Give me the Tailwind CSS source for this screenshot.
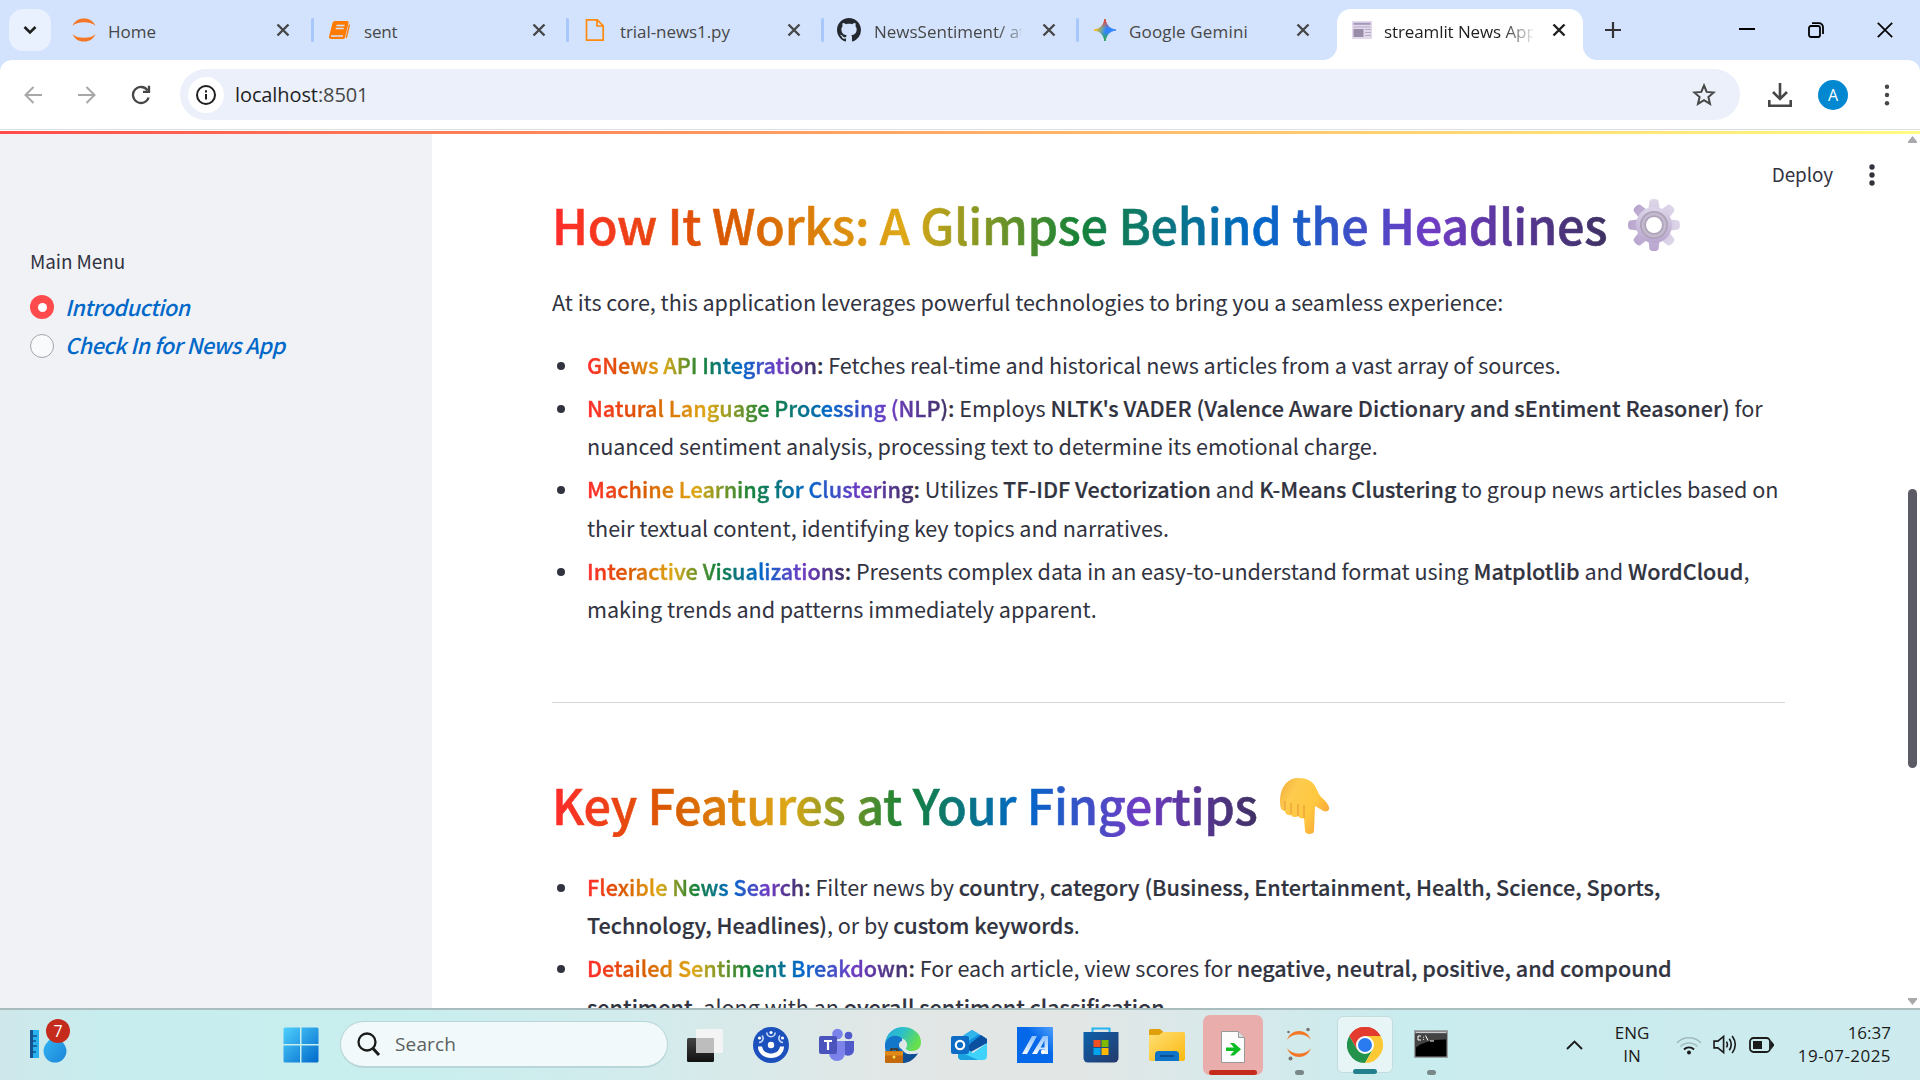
<!DOCTYPE html>
<html lang="en">
<head>
<meta charset="utf-8">
<title>streamlit News App</title>
<script src="https://cdn.jsdelivr.net/npm/@tailwindcss/browser@4"></script>
</head>
<body class="w-[1920px] h-[1080px] overflow-hidden flex flex-col bg-white font-['Open_Sans','Noto_Sans',sans-serif]">

<!-- Tab strip -->
<header class="h-[60px] shrink-0 bg-[#d3e3fd] flex text-[17px] text-[#474747] relative">
  <div class="ml-[9px] mt-[9px] w-[42px] h-[42px] rounded-[14px] bg-[#e9f0fe] grid place-items-center mr-[9px]">
    <svg width="14" height="10" viewBox="0 0 14 10" fill="none" stroke="#1f1f1f" stroke-width="2.6"><path d="M1.5 2l5.5 5.5L12.500 2"/></svg>
  </div>
  <div class="w-[255px] flex items-center pl-3">
    <svg width="24" height="24" viewBox="0 0 24 24" fill="#f37726"><path d="M.5 8C2.500 3 6.500.5 12 .5S21.500 3 23.500 8C21 5.300 17 4.200 12 4.200S3 5.300.5 8zM.5 16C3 18.700 7 19.800 12 19.800s9-1.100 11.500-3.800c-2 5-6 7.500-11.500 7.500S2.500 21 .5 16z"/></svg>
    <span class="ml-3 w-[148px] pt-[3px] whitespace-nowrap">Home</span>
    <svg class="ml-[20px]" width="14" height="14" viewBox="0 0 14 14" stroke="#474747" stroke-width="2.400"><path d="M1.500 1.500l11 11M12.500 1.500l-11 11"/></svg>
    <i class="ml-auto mr-[1px] w-[3px] h-6 rounded bg-[#a8c7fa]"></i>
  </div>
  <div class="w-[255px] flex items-center pl-3">
    <svg width="24" height="24" viewBox="0 0 24 24"><path d="M7.500 3H20a1.500 1.500 0 0 1 1.500 2L18 19.500a2 2 0 0 1-2 1.500H4a2 2 0 0 1-2-2.500L5.500 5a2.500 2.500 0 0 1 2-2z" fill="#ff7b00"/><path d="M9.500 7.500h8M8.700 10.500h8M4 18h12" stroke="#d3e3fd" stroke-width="1.300"/><path d="M22.500 6.500L19.300 20" stroke="#ff7b00" stroke-width="1.300"/></svg>
    <span class="ml-[13px] w-[147px] pt-[3px] whitespace-nowrap tracking-[-0.2px]">sent</span>
    <svg class="ml-[21px]" width="14" height="14" viewBox="0 0 14 14" stroke="#474747" stroke-width="2.400"><path d="M1.500 1.500l11 11M12.500 1.500l-11 11"/></svg>
    <i class="ml-auto mr-[1px] w-[3px] h-6 rounded bg-[#a8c7fa]"></i>
  </div>
  <div class="w-[255px] flex items-center pl-3">
    <svg width="24" height="24" viewBox="0 0 24 24" fill="none" stroke="#ff8a0f" stroke-width="1.700"><path d="M4.500 1.800h10.700l6 6v14.400H4.500zM15 2v6h6"/></svg>
    <span class="ml-[14px] w-[146px] pt-[3px] whitespace-nowrap tracking-[-0.07px]">trial-news1.py</span>
    <svg class="ml-[21px]" width="14" height="14" viewBox="0 0 14 14" stroke="#474747" stroke-width="2.400"><path d="M1.500 1.500l11 11M12.500 1.500l-11 11"/></svg>
    <i class="ml-auto mr-[1px] w-[3px] h-6 rounded bg-[#a8c7fa]"></i>
  </div>
  <div class="w-[255px] flex items-center pl-3">
    <svg width="24" height="24" viewBox="0 0 16 16" fill="#24292f"><path d="M8 0C3.580 0 0 3.580 0 8c0 3.540 2.290 6.530 5.470 7.590.4.070.55-.17.55-.38 0-.19-.01-.82-.01-1.490-2.010.37-2.530-.49-2.690-.94-.09-.23-.48-.94-.82-1.130-.28-.15-.68-.52-.01-.53.63-.01 1.080.58 1.230.82.72 1.210 1.870.87 2.330.66.07-.52.28-.87.51-1.070-1.780-.2-3.640-.89-3.640-3.950 0-.87.31-1.590.82-2.150-.08-.2-.36-1.020.08-2.120 0 0 .67-.21 2.200.82.64-.18 1.320-.27 2-.27s1.360.09 2 .27c1.530-1.040 2.200-.82 2.200-.82.44 1.100.16 1.920.08 2.120.51.56.82 1.270.82 2.150 0 3.070-1.870 3.750-3.650 3.950.29.25.54.73.54 1.480 0 1.070-.01 1.930-.01 2.200 0 .21.15.46.55.38A8.010 8.010 0 0 0 16 8c0-4.420-3.580-8-8-8z"/></svg>
    <span class="ml-[13px] w-[147px] pt-[3px] whitespace-nowrap [mask-image:linear-gradient(to_right,#000_122px,transparent_160px)]">NewsSentiment/ at</span>
    <svg class="ml-[21px]" width="14" height="14" viewBox="0 0 14 14" stroke="#474747" stroke-width="2.400"><path d="M1.500 1.500l11 11M12.500 1.500l-11 11"/></svg>
    <i class="ml-auto mr-[1px] w-[3px] h-6 rounded bg-[#a8c7fa]"></i>
  </div>
  <div class="w-[257px] flex items-center pl-[13px]">
    <svg width="24" height="24" viewBox="0 0 24 24"><defs><linearGradient id="ga" x1="0" x2="1" y1=".3" y2=".6"><stop offset=".1" stop-color="#fbbc04"/><stop offset=".42" stop-color="#5fa0b8"/><stop offset=".55" stop-color="#3186ff"/></linearGradient><linearGradient id="gb" x1="0" x2="0" y1="0" y2="1"><stop offset=".05" stop-color="#ea4335"/><stop offset=".42" stop-color="#ea4335" stop-opacity="0"/><stop offset=".6" stop-color="#34a853" stop-opacity="0"/><stop offset=".9" stop-color="#34a853"/></linearGradient></defs><path d="M12 1c1 6 4.500 10 11 11-6.500 1-10 5-11 11C11 17 7.500 13 1 12 7.500 11 11 7 12 1z" fill="url(#ga)" stroke="url(#ga)"/><path d="M12 1c1 6 4.500 10 11 11-6.500 1-10 5-11 11C11 17 7.500 13 1 12 7.500 11 11 7 12 1z" fill="url(#gb)" stroke="url(#gb)"/></svg>
    <span class="ml-[12px] w-[148px] pt-[3px] whitespace-nowrap tracking-[0.15px]">Google Gemini</span>
    <svg class="ml-[19px]" width="14" height="14" viewBox="0 0 14 14" stroke="#474747" stroke-width="2.400"><path d="M1.500 1.500l11 11M12.500 1.500l-11 11"/></svg>
  </div>
  <div class="relative w-[246px] mt-[9px] h-[51px] pb-[9px] rounded-t-[14px] bg-white flex items-center pl-[14px] text-[#1f1f1f]">
    <svg class="absolute -left-[14px] bottom-0" width="14" height="14"><path d="M14 0v14H0A14 14 0 0 0 14 0z" fill="#fff"/></svg>
    <svg class="absolute -right-[14px] bottom-0" width="14" height="14"><path d="M0 0v14h14A14 14 0 0 1 0 0z" fill="#fff"/></svg>
    <svg width="22" height="20" viewBox="0 0 22 20"><path d="M1 1h20v18H1z" fill="#e2d9ec"/><path d="M2.500 3.800h17" stroke="#a497b8" stroke-width="2"/><rect x="2.500" y="9" width="10" height="8" fill="#998ca8"/><path d="M14 9.500h6M14 12.500h6M14 15.500h6M2.500 7h17" stroke="#b5a9c4" stroke-width="1"/></svg>
    <span class="ml-[11px] w-[149px] pt-[4px] whitespace-nowrap tracking-[-0.1px] [mask-image:linear-gradient(to_right,#000_118px,transparent_152px)]">streamlit News App</span>
    <svg class="ml-[19px]" width="14" height="14" viewBox="0 0 14 14" stroke="#1f1f1f" stroke-width="2.400"><path d="M1.500 1.500l11 11M12.500 1.500l-11 11"/></svg>
  </div>
  <svg class="ml-[22px] mt-[22px]" width="16" height="16" stroke="#333" stroke-width="2.200"><path d="M8 0v16M0 8h16"/></svg>
  <svg class="ml-[118px] mt-[21px]" width="16" height="16" stroke="#000" stroke-width="2"><path d="M0 8h16"/></svg>
  <svg class="ml-[53px] mt-[22px]" width="16" height="16" fill="none" stroke="#000" stroke-width="1.800"><rect x="1" y="4" width="11" height="11" rx="2"/><path d="M4 1.200h7a4 4 0 0 1 4 4V12"/></svg>
  <svg class="ml-[53px] mt-[22px]" width="16" height="16" stroke="#000" stroke-width="1.700"><path d="M.8.8l14.400 14.400M15.200.8L.8 15.200"/></svg>
</header>

<!-- Address bar -->
<div class="h-[71px] shrink-0 bg-[#d3e3fd]">
 <div class="h-[71px] bg-white rounded-t-[12px]">
 <div class="h-[70px] flex items-center border-b border-[#dcdfe1]">
  <svg class="ml-6" width="18" height="18" fill="none" stroke="#a8a8a8" stroke-width="2"><path d="M18 9H1.500M9.500 1L1.500 9l8 8"/></svg>
  <svg class="ml-9" width="18" height="18" fill="none" stroke="#a8a8a8" stroke-width="2"><path d="M0 9h16.500M8.500 1l8 8-8 8"/></svg>
  <svg class="ml-[35px]" width="20" height="20" viewBox="0 0 20 20" fill="none" stroke="#474747" stroke-width="2.300"><path d="M17.600 12.500A8 8 0 1 1 16.500 5.300M18 .8V6.800H12"/></svg>
  <div class="ml-[29px] w-[1560px] h-[51px] rounded-full bg-[#ebf0fa] flex items-center pl-2">
    <div class="size-[36px] rounded-full bg-white grid place-items-center"><svg width="20" height="20" fill="none" stroke="#1f1f1f" stroke-width="2"><circle cx="10" cy="10" r="9"/><path d="M10 9v5.500M10 5.300v2.200"/></svg></div>
    <span class="ml-[11px] text-[20px] text-[#1f1f1f] whitespace-nowrap tracking-[-0.1px]">localhost<span class="text-[#474747]">:8501</span></span>
    <svg class="ml-auto mr-[24px]" width="24" height="24" viewBox="0 0 24 24" fill="none" stroke="#474747" stroke-width="2"><path d="M12 2.500l2.700 6.400 6.900.6-5.200 4.500 1.600 6.800-6-3.600-6 3.600 1.600-6.800-5.200-4.500 6.900-.6z"/></svg>
  </div>
  <svg class="ml-[28px]" width="24" height="24" fill="none" stroke="#474747" stroke-width="2.600"><path d="M12 0v15M5 9l7 7 7-7M1.300 17v5.700h21.400V17"/></svg>
  <div class="ml-[26px] size-[30px] rounded-full bg-[#0288d1] text-white text-[16px] grid place-items-center">A</div>
  <svg class="ml-[35px]" width="8" height="22" fill="#474747"><circle cx="4" cy="2.800" r="2.200"/><circle cx="4" cy="11" r="2.200"/><circle cx="4" cy="19.200" r="2.200"/></svg>
 </div>
 </div>
</div>

<div class="h-[3px] shrink-0 bg-linear-to-r from-[#ff4b4b] to-[#fffd80]"></div>

<!-- App -->
<div class="relative h-[874px] shrink-0 overflow-hidden flex font-['Noto_Sans_CJK_SC','Source_Sans_3',sans-serif] text-[#31333f]">
  <aside class="w-[432px] shrink-0 bg-[#f0f2f6] pl-[30px] pt-[110px]">
    <div class="text-[18.900px] leading-[34px] tracking-[-0.07px]">Main Menu</div>
    <div class="mt-[10px] flex flex-col text-[21.600px] leading-[38px] text-[#0068c9] italic font-medium tracking-[-0.45px]">
      <div class="h-[38px] flex items-center"><i class="size-6 rounded-full bg-[#ff4b4b] grid place-items-center"><i class="size-[9px] rounded-full bg-white"></i></i><span class="ml-[11px]">Introduction</span></div>
      <div class="h-[38px] flex items-center"><i class="mt-px size-6 rounded-full bg-[#f9fafc] border-[1.500px] border-[#a3a4ac]"></i><span class="ml-[11px]">Check In for News App</span></div>
    </div>
  </aside>
  <main class="w-[1470px] pl-[120px] pt-[58px] text-[21.600px] leading-[38.400px] whitespace-nowrap tracking-[-0.04px]">
    <h2 class="flex items-center text-[48.600px] leading-[65px] font-medium tracking-[-0.3px]"><span class="bg-clip-text text-transparent [-webkit-text-stroke:0.6px_transparent] bg-[linear-gradient(to_right,#ff2b2b,#d95a00,#dea816,#158237,#0068c9,#6f3cc4,#3f3163)]">How It Works: A Glimpse Behind the Headlines</span>
      <svg class="ml-5" width="54" height="54" viewBox="0 0 54 54"><defs><linearGradient id="ge" x1="0" x2="0" y1="0" y2="1"><stop stop-color="#ddd6e8"/><stop offset="1" stop-color="#b9a6cf"/></linearGradient></defs><g fill="url(#ge)"><g id="t"><path d="M21 14l1.500-11q.5-2 4.500-2t4.500 2L33 14zM21 40l1.500 11q.5 2 4.500 2t4.500-2L33 40z"/></g><use href="#t" transform="rotate(45 27 27)"/><use href="#t" transform="rotate(90 27 27)"/><use href="#t" transform="rotate(135 27 27)"/><circle cx="27" cy="27" r="18"/></g><circle cx="27" cy="27" r="11" fill="#fff" stroke="#aea3ba" stroke-width="6"/><circle cx="27" cy="27" r="11" fill="none" stroke="#c3bacd" stroke-width="2.500"/></svg></h2>
    <p class="mt-[26px]">At its core, this application leverages powerful technologies to bring you a seamless experience:</p>
    <ul class="mt-[24.200px] pl-[35px] list-none flex flex-col gap-[4.800px] [&>li]:relative [&_s]:no-underline [&_s]:bg-clip-text [&_s]:text-transparent [&_s]:[-webkit-text-stroke:0.4px_transparent] [&_s]:bg-[linear-gradient(to_right,#ff2b2b,#d95a00,#dea816,#158237,#0068c9,#6f3cc4,#3f3163)] [&_strong]:font-medium [&_strong]:tracking-[0.005px] [&_strong]:[-webkit-text-stroke:0.2px_#31333f]">
      <li><i class="absolute -left-[30px] top-[16px] size-[8px] rounded-full bg-[#31333f]"></i><strong><s>GNews API Integration</s>:</strong> Fetches real-time and historical news articles from a vast array of sources.</li>
      <li><i class="absolute -left-[30px] top-[16px] size-[8px] rounded-full bg-[#31333f]"></i><strong><s>Natural Language Processing (NLP)</s>:</strong> Employs <strong>NLTK's VADER (Valence Aware Dictionary and sEntiment Reasoner)</strong> for<br>nuanced sentiment analysis, processing text to determine its emotional charge.</li>
      <li><i class="absolute -left-[30px] top-[16px] size-[8px] rounded-full bg-[#31333f]"></i><strong><s>Machine Learning for Clustering</s>:</strong> Utilizes <strong>TF-IDF Vectorization</strong> and <strong>K-Means Clustering</strong> to group news articles based on<br>their textual content, identifying key topics and narratives.</li>
      <li><i class="absolute -left-[30px] top-[16px] size-[8px] rounded-full bg-[#31333f]"></i><strong><s>Interactive Visualizations</s>:</strong> Presents complex data in an easy-to-understand format using <strong>Matplotlib</strong> and <strong>WordCloud</strong>,<br>making trends and patterns immediately apparent.</li>
    </ul>
    <hr class="mt-[73.400px] w-[1233px] border-[#d6d6d9]">
    <h2 class="mt-[69px] flex items-center text-[48.600px] leading-[65px] font-medium tracking-[-0.26px]"><span class="bg-clip-text text-transparent [-webkit-text-stroke:0.6px_transparent] bg-[linear-gradient(to_right,#ff2b2b,#d95a00,#dea816,#158237,#0068c9,#6f3cc4,#3f3163)]">Key Features at Your Fingertips</span>
      <svg class="ml-[19px] mt-[3px]" width="54" height="58" viewBox="0 0 54 58"><defs><linearGradient id="gh" x1="0" x2="1" y1="0" y2=".6"><stop stop-color="#f0a93a"/><stop offset=".3" stop-color="#fdcb4e"/><stop offset=".7" stop-color="#ffc83f"/><stop offset="1" stop-color="#f9a83a"/></linearGradient></defs><path d="M3 22C4 8 12 1 21 1c9 0 15 3 18 10l3 6c2 4 8 7 10 13 1 4-3 6-7 3l-7-4-1 25c0 4-9 4-9 0l-1-13c-2 1-5 0-6-2-2 2-6 1-7-1-3 1-6-1-6-4-4 0-5-3-5-12z" fill="url(#gh)"/><path d="M8 33V24M14 37V26M21 39V27M27 41V28" stroke="#eda23a" stroke-width="1.300" fill="none"/></svg></h2>
    <ul class="mt-[30.600px] pl-[35px] list-none flex flex-col gap-[4.800px] [&>li]:relative [&_s]:no-underline [&_s]:bg-clip-text [&_s]:text-transparent [&_s]:[-webkit-text-stroke:0.4px_transparent] [&_s]:bg-[linear-gradient(to_right,#ff2b2b,#d95a00,#dea816,#158237,#0068c9,#6f3cc4,#3f3163)] [&_strong]:font-medium [&_strong]:tracking-[0.005px] [&_strong]:[-webkit-text-stroke:0.2px_#31333f]">
      <li><i class="absolute -left-[30px] top-[16px] size-[8px] rounded-full bg-[#31333f]"></i><strong><s>Flexible News Search</s>:</strong> Filter news by <strong>country</strong>, <strong>category (Business, Entertainment, Health, Science, Sports,</strong><br><strong>Technology, Headlines)</strong>, or by <strong>custom keywords</strong>.</li>
      <li><i class="absolute -left-[30px] top-[16px] size-[8px] rounded-full bg-[#31333f]"></i><strong><s>Detailed Sentiment Breakdown</s>:</strong> For each article, view scores for <strong>negative, neutral, positive, and compound</strong><br><strong>sentiment</strong>, along with an <strong>overall sentiment classification</strong>.</li>
    </ul>
  </main>
  <!-- App toolbar -->
  <div class="absolute right-[42px] top-[23px] flex items-center gap-[33px] text-[18.900px] leading-[34px] tracking-[-0.1px]">Deploy
    <svg class="mt-[2px]" width="12" height="22" fill="#31333f"><circle cx="6" cy="3" r="2.700"/><circle cx="6" cy="11" r="2.700"/><circle cx="6" cy="19" r="2.700"/></svg></div>
  <!-- Scrollbar -->
  <svg class="absolute right-[3px] top-[2px]" width="9" height="7" fill="#a8a8ad"><path d="M4.500 0L9 5.500V7H0V5.500z"/></svg>
  <div class="absolute right-[3px] top-[355px] w-[9px] h-[279px] rounded-full bg-[#5a5b65]"></div>
  <svg class="absolute right-[3px] bottom-[3px]" width="9" height="7" fill="#a8a8ad"><path d="M4.500 7L9 1.500V0H0v1.500z"/></svg>
</div>

<!-- Taskbar -->
<footer class="h-[72px] shrink-0 border-t-2 border-[#a9bcbe] bg-[linear-gradient(to_right,#cfe7ea,#c8edee_5%,#c9eeee_22%,#d3ebec_34%,#e1e7e6_46%,#e2e6e5_56%,#d6e9eb_65%,#c9ecee_73%,#cdebee_100%)] flex items-center text-[#1b1b1b] pb-px">
  <div class="relative ml-[29px] w-[44px] h-[40px]">
    <svg width="40" height="40" viewBox="0 0 40 40"><defs><linearGradient id="dr" x1="0" y1="0" x2="1" y2="1"><stop stop-color="#35b8f5"/><stop offset="1" stop-color="#1a84d8"/></linearGradient></defs><rect x="1" y="5" width="9" height="28" fill="#27b1ef"/><path d="M2.500 5v28" stroke="#14538f" stroke-width="3"/><path d="M4 11h4M4 16h3M4 21h4M4 27h3" stroke="#14538f" stroke-width="1.600"/><path d="M26 8c4 6 11.500 11 11.500 18a11.500 11.500 0 0 1-23 0C14.500 19 22 14 26 8z" fill="url(#dr)"/></svg>
    <span class="absolute left-[17px] -top-[6px] size-6 rounded-full bg-[#c42b1c] text-white text-[16px] leading-6 text-center">7</span>
  </div>
  <svg class="ml-[210px]" width="36" height="36" viewBox="0 0 36 36"><defs><linearGradient id="wi" x1="0" y1="0" x2="1" y2="1" ><stop stop-color="#4fd0fd"/><stop offset="1" stop-color="#0069cb"/></linearGradient></defs><path d="M2 .5h15v16.500H.5V2A1.500 1.500 0 0 1 2 .5zM18.500.5H34A1.500 1.500 0 0 1 35.500 2v15h-17zM.5 18.500H17v17H2A1.500 1.500 0 0 1 .5 34zM18.500 18.500h17V34a1.500 1.500 0 0 1-1.500 1.500H18.500z" fill="url(#wi)"/></svg>
  <div class="ml-[21px] w-[328px] h-[47px] rounded-full bg-[#f1f9fa] border border-[#b9d6d8] border-b-2 flex items-center pl-[16px]">
    <svg width="24" height="24" viewBox="0 0 24 24" fill="none" stroke="#1b1b1b" stroke-width="2.300"><circle cx="10" cy="10" r="8.500"/><path d="M16 16.500l6 6.500" stroke-width="3"/></svg>
    <span class="ml-[14px] text-[19px] text-[#5b5f60] tracking-[0.15px]">Search</span>
  </div>
  <div class="ml-[4px] flex items-center [&>div]:w-[66px] [&>div]:h-[70px] [&>div]:grid [&>div]:place-items-center [&>div]:relative">
    <div><svg width="36" height="36" viewBox="0 0 36 36"><defs><linearGradient id="tv" x1="0" y1="0" x2="0" y2="1"><stop stop-color="#444"/><stop offset="1" stop-color="#111"/></linearGradient></defs><rect y="11" width="27" height="24" rx="1.500" fill="url(#tv)"/><rect x="9" y="2" width="27" height="24" rx="1.500" fill="#f4f4f4"/><path d="M9 11h18v15H9z" fill="#bdbdbd"/></svg></div>
    <div><svg width="36" height="36" viewBox="0 0 36 36" fill="none"><circle cx="18" cy="18" r="18" fill="#1c50bd"/><path d="M5 19.500h4c1 5 5 7 9 7s8-2 9-7h4c0 7-6 11.500-13 11.500S5 26.500 5 19.500z" fill="#fff"/><circle cx="18" cy="18" r="3.200" fill="#fff"/><g stroke="#c9dbfb" stroke-width="1.600"><path d="M13.800 5.500a4.200 4.200 0 0 0 8.400 0M9 8.500a4.200 4.200 0 0 1-3 7M27 8.500a4.200 4.200 0 0 0 3 7"/></g><circle cx="18" cy="5.500" r="1.600" fill="#fff"/><circle cx="6.500" cy="11" r="1.600" fill="#fff"/><circle cx="29.500" cy="11" r="1.600" fill="#fff"/></svg></div>
    <div><svg width="36" height="36" viewBox="0 0 36 36"><circle cx="29.500" cy="8.500" r="3.800" fill="#5059c9"/><path d="M26 14h9v9a6 6 0 0 1-9 5z" fill="#5059c9"/><circle cx="18.500" cy="7" r="5.300" fill="#7b83eb"/><path d="M10 14h16v12a8 8 0 0 1-16 0z" fill="#7b83eb"/><rect y="9" width="18" height="18" rx="2" fill="#4b53bc"/><path d="M5 14h8M9 14v9" stroke="#fff" stroke-width="2.200"/></svg></div>
    <div><svg width="36" height="36" viewBox="0 0 36 36"><defs><linearGradient id="ed" x1="0" y1="0" x2="1" y2=".4"><stop stop-color="#2aa9e0"/><stop offset=".5" stop-color="#2cc0c8"/><stop offset="1" stop-color="#66e04c"/></linearGradient></defs><path d="M0 17C1 6 9 0 18 0s18 6 18 15c0 6-4 9-9 9s-7-2-6-4 1-7-3-8C11 9 3 11 0 17z" fill="url(#ed)"/><path d="M0 17c2-7 9-10 15-7 4 2 1 4 1 8 0 6 6 10 12 10-3 5-6 8-11 8C7 36-1 28 0 17z" fill="#1277c9"/><path d="M13 20c2 6 9 9 20 6-3 6-9 10-15 10-4-4-6-10-5-16z" fill="#114f95"/><circle cx="18" cy="18" r="4" fill="#e0e7e7"/><path d="M17 20c3 6 10 7 17 4.500" stroke="#e0e7e7" stroke-width="2.500" fill="none"/><rect y="24" width="18" height="12" rx="1" fill="#c4690c"/><path d="M0 24.500h18v4H0z" fill="#e08a1a"/><path d="M6 24v-2h6v2" stroke="#4a3010" stroke-width="1.500" fill="none"/><circle cx="9" cy="30" r="1.500" fill="#ffe04a"/></svg></div>
    <div><svg width="36" height="36" viewBox="0 0 36 36"><path d="M7 12L21 3l15 9v5H7z" fill="#1490df"/><path d="M13 8l8-5 7 4-15 10z" fill="#32b5ea"/><path d="M15 20L30 8l6 4v4L18 26z" fill="#0a4fa0"/><path d="M7 16l15 10 14-10v13a4 4 0 0 1-4 4H11a4 4 0 0 1-4-4z" fill="#3fd2fa"/><path d="M7 24l20 9H11a4 4 0 0 1-4-4z" fill="#1aa2e0"/><rect y="9" width="18" height="18" rx="2" fill="#0f6cc4"/><circle cx="9" cy="18" r="4.200" fill="none" stroke="#fff" stroke-width="2.200"/></svg></div>
    <div><svg width="36" height="36" viewBox="0 0 36 36"><defs><linearGradient id="as" x1="0" y1="1" x2="1" y2="0"><stop offset=".6" stop-color="#0568e8"/><stop offset="1" stop-color="#4ea1ff"/></linearGradient><linearGradient id="al" x1="0" y1="1" x2="0" y2="0"><stop stop-color="#f2f8ff"/><stop offset="1" stop-color="#8fc2ff"/></linearGradient></defs><path d="M0 0h36v36H0z" fill="url(#as)"/><path d="M5 27L15 9h5L10 27zM15 27L26 9h5v18h-3.500V13.500L20 27z" fill="url(#al)"/><path d="M21 21.500h8" stroke="#cfe6ff" stroke-width="2"/><circle cx="26" cy="25" r="2.200" fill="#fff"/></svg></div>
    <div><svg width="36" height="36" viewBox="0 0 36 36"><defs><linearGradient id="st" x1="0" y1="0" x2="1" y2="1"><stop stop-color="#0c61ac"/><stop offset="1" stop-color="#24396b"/></linearGradient></defs><path d="M9.500 7V1.500h17V7" fill="none" stroke="#26b4ee" stroke-width="2"/><path d="M.5 5h35v26a4.500 4.500 0 0 1-4.500 4.500H5A4.500 4.500 0 0 1 .5 31z" fill="url(#st)"/><path d="M10.500 13h7v7h-7z" fill="#f25022"/><path d="M18.500 13h7v7h-7z" fill="#7fba00"/><path d="M10.500 21h7v7h-7z" fill="#00a4ef"/><path d="M18.500 21h7v7h-7z" fill="#ffb900"/></svg></div>
    <div><svg width="36" height="36" viewBox="0 0 36 36"><defs><linearGradient id="fo" x1="0" y1="0" x2="1" y2="1"><stop stop-color="#ffdf75"/><stop offset="1" stop-color="#fbb90f"/></linearGradient></defs><path d="M0 3.500A1.500 1.500 0 0 1 1.500 2H11l3.500 3v3H0z" fill="#dfa00b"/><path d="M0 8h10l4-3h20.500A1.500 1.500 0 0 1 36 6.500V32a2 2 0 0 1-2 2H2a2 2 0 0 1-2-2z" fill="url(#fo)"/><path d="M6 34v-6.500A3.500 3.500 0 0 1 9.500 24h17a3.500 3.500 0 0 1 3.500 3.500V34z" fill="#0f74c8"/><path d="M11 29h14" stroke="#0b4f92" stroke-width="2"/></svg></div>
    <div><div class="w-[60px] h-[60px] rounded-[7px] bg-[#e9aeab] grid place-items-center relative"><svg class="mt-[4px]" width="24" height="32" viewBox="0 0 24 32"><path d="M.5.5h17l6 6v25H.5z" fill="#fdfdfd" stroke="#999"/><path d="M17.500.5v6h6" fill="#ddd" stroke="#999"/><path d="M5 16.500h8l-4-4.500h4l7 6.200-7 6.300H9l4-4.500H5z" fill="#0bbd22"/></svg><i class="absolute bottom-0 w-12 h-[5px] rounded-full bg-[#c42b1c]"></i></div></div>
    <div><svg class="-mt-[2px]" width="28" height="34" viewBox="0 0 28 34" fill="#f37726"><path d="M2 13C4 7 9 4 14 4s10 3 12 9C23 9 19 7.500 14 7.500S5 9 2 13zM2 21c3 4 7 5.500 12 5.500s9-1.500 12-5.500c-2 6-7 9-12 9S4 27 2 21z"/><g fill="#767677"><circle cx="23" cy="2.500" r="1.800"/><circle cx="3.500" cy="5" r="1.300"/><circle cx="5.500" cy="31.500" r="2"/></g></svg><i class="absolute bottom-[5px] w-[9px] h-[5px] rounded-full bg-[#788788]"></i></div>
    <div><div class="w-[56px] h-[57px] rounded-[6px] bg-[#e8f5f7] border border-[#c5dcdf] grid place-items-center relative"><svg width="36" height="36" viewBox="0 0 36 36"><path d="M18 18L2.410 9A18 18 0 0 1 33.590 9z" fill="#e33b2e"/><path d="M2.410 9A18 18 0 0 0 18 36l7.800-13.500H10.200z" fill="#23924a"/><path d="M33.590 9A18 18 0 0 1 18 36l7.800-13.500L18 9z" fill="#fcc934"/><path d="M2.410 9A18 18 0 0 1 33.590 9H18l-7.800 13.500z" fill="#e33b2e"/><circle cx="18" cy="18" r="9" fill="#fff"/><circle cx="18" cy="18" r="7" fill="#2a7bf0"/></svg><i class="absolute -bottom-[2px] w-6 h-[5px] rounded-full bg-[#23808d]"></i></div></div>
    <div><svg class="-mt-[2px]" width="34" height="28" viewBox="0 0 34 28"><rect x=".7" y=".7" width="32.600" height="26.600" fill="#000" stroke="#9a9fa2" stroke-width="1.500"/><path d="M1.500 1.500h31v2h-31z" fill="#c9cdd0"/><path d="M1.500 3.500h31v6C20 9 8 12 1.500 18z" fill="#444"/><path d="M7 6H4v4h3M9.500 6.800v.8M9.500 9v.8M11.500 5.500L14 10.500M16 11h4" stroke="#fff" stroke-width="1" fill="none"/></svg><i class="absolute bottom-[5px] w-[9px] h-[5px] rounded-full bg-[#788788]"></i></div>
  </div>
  <div class="ml-auto mr-[29px] flex items-center text-[17px] leading-[23px]">
    <svg width="17" height="10" fill="none" stroke="#1b1b1b" stroke-width="1.900"><path d="M1 9l7.500-7.500L16 9"/></svg>
    <div class="ml-[30px] -mt-px w-[38px] text-center">ENG<br>IN</div>
    <svg class="ml-[25px]" width="26" height="20" viewBox="0 0 26 20" fill="none" stroke-width="1.600"><path d="M1 8a16.500 16.500 0 0 1 24 0M4.500 11.500a12 12 0 0 1 17 0" stroke="#a3bcbe"/><path d="M8 14.500a7 7 0 0 1 10 0" stroke="#1b1b1b" stroke-width="1.900"/><circle cx="13" cy="17.500" r="2" fill="#1b1b1b"/></svg>
    <svg class="ml-[11px]" width="25" height="21" viewBox="0 0 26 22" fill="none" stroke="#1b1b1b" stroke-width="1.700"><path d="M1 7.500h4l6-5v17l-6-5H1zM14 8q2 3 0 6M17 5q4 6 0 12M20 2q6.500 9 0 18"/></svg>
    <svg class="ml-[11px]" width="25" height="16" viewBox="0 0 25 16" fill="none" stroke="#1b1b1b" stroke-width="1.800"><rect x="1" y="1" width="20" height="14" rx="3.500"/><path d="M4 4h9v8H4z" fill="#1b1b1b" stroke="none"/><path d="M22.500 5.500l2 2.500-2 2.500z" fill="#1b1b1b"/></svg>
    <div class="ml-[22px] -mt-[2px] text-right w-[95px]">16:37<br><span class="tracking-[0.45px]">19-07-2025</span></div>
  </div>
</footer>
</body>
</html>
